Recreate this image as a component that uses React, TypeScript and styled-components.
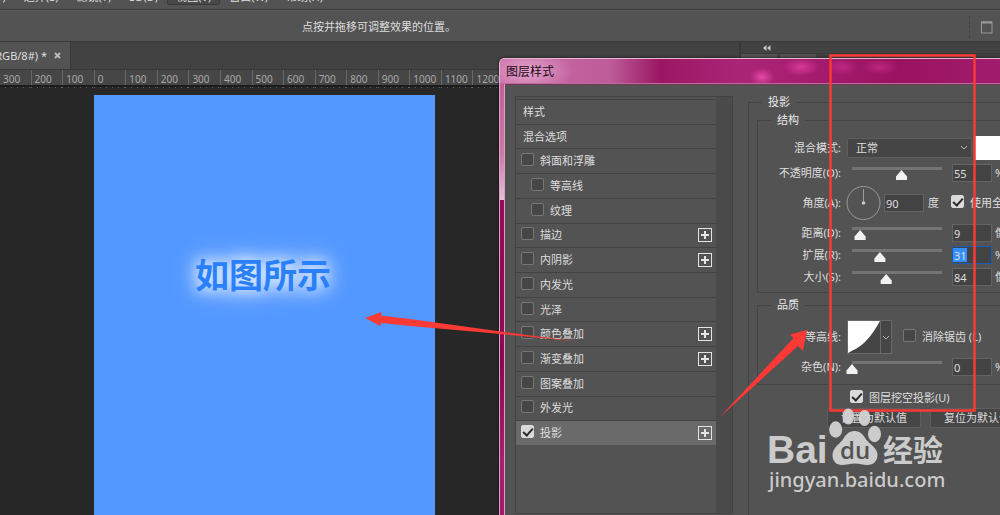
import React from "react";
import styled, { createGlobalStyle, css } from "styled-components";

const GlobalStyle = createGlobalStyle`
  * { box-sizing: border-box; }
  body {
    margin: 0;
    background: #272727;
    color: #dedede;
    font: 11px/16px "Noto Sans", "Noto Sans CJK SC", sans-serif;
    overflow: hidden;
  }
  button, input, select { font: inherit; color: inherit; margin: 0; }
`;

const Screen = styled.div`
  position: relative;
  display: flex;
  flex-direction: column;
  height: 100vh;
  overflow: hidden;
  white-space: nowrap;
`;

const MenuBar = styled.nav`
  display: flex;
  align-items: flex-end;
  height: 10px;
  flex: none;
  overflow: hidden;
  background: #535353;
  border-bottom: 1px solid #3c3c3c;
  padding-bottom: 4px;
`;

const MenuItems = styled.div`
  display: flex;
  margin-left: -38px;
`;

const MenuItem = styled.button<{ $active?: boolean }>`
  flex: none;
  border: 1px solid ${(p) => (p.$active ? "#3a3a3a" : "transparent")};
  border-radius: 2px;
  background: ${(p) => (p.$active ? "#484848" : "none")};
  padding: 0 8px;
  line-height: 14px;
`;

const OptionBar = styled.header`
  display: flex;
  align-items: center;
  justify-content: space-between;
  height: 32px;
  flex: none;
  background: #535353;
  border-top: 1px solid #5a5a5a;
  border-bottom: 1px solid #3a3a3a;
  padding: 2px 7px 0 302px;
`;

const Workspace = styled.button`
  display: flex;
  align-items: center;
  border: 0;
  border-left: 1px dashed #444;
  background: none;
  padding: 0 0 0 11px;
  height: 22px;
`;

const TabBar = styled.div`
  display: flex;
  justify-content: space-between;
  height: 27px;
  flex: none;
  background: #424242;
`;

const DocTab = styled.div`
  display: flex;
  align-items: center;
  gap: 7px;
  width: 71px;
  flex: none;
  background: #535353;
  border-right: 1px solid #3a3a3a;
`;

const CloseButton = styled.button`
  border: 0;
  background: none;
  padding: 0;
  display: flex;
`;

const DocName = styled.span`
  display: flex;
  justify-content: flex-end;
  width: 47px;
  overflow: hidden;
`;

const PanelDock = styled.div`
  width: 261px;
  border-left: 2px solid #383838;
`;

const DockHandle = styled.div`
  height: 12px;
  padding: 3px 0 0 22px;
  border-bottom: 1px solid #3a3a3a;
  line-height: 0;
`;

const DockTabs = styled.div`
  display: flex;
  gap: 3px;
  div { width: 36px; height: 15px; background: #535353; }
`;

const Ruler = styled.div`
  display: grid;
  grid-template-columns: repeat(16, 1fr);
  width: 505px;
  margin-left: -1px;
  height: 16px;
  flex: none;
  background: #464646;
  border-top: 1px solid #383838;
  color: #a8a8a8;
  font-size: 10px;
  line-height: 18px;
`;

const RulerCell = styled.div`
  border-left: 1px solid #686868;
  padding-left: 3px;
  background: repeating-linear-gradient(90deg, transparent 0 5px, #606060 5px 6px) 0 100% / 100% 2px no-repeat;
`;

const Canvas = styled.main`
  flex: 1;
  border-top: 2px solid #1c1c1c;
  padding: 8px 0 0 94px;
`;

const Artboard = styled.div`
  width: 341px;
  height: 100%;
  background: #5298ff;
  padding-top: 154px;
  padding-left: 101px;
  color: #2a80fb;
  font: bold 34px/50px "Noto Sans CJK SC", sans-serif;
  text-shadow: 0 0 14px rgba(255, 255, 255, 0.8), 0 0 20px rgba(255, 255, 255, 0.7),
    0 0 32px rgba(255, 255, 255, 0.5);
`;

const Dialog = styled.section`
  position: absolute;
  left: 499px;
  right: 0;
  top: 58px;
  bottom: 0;
  display: flex;
  flex-direction: column;
  overflow: hidden;
  border-radius: 5px 0 0 0;
  box-shadow: 0 0 3px #111;
`;

const TitleBar = styled.h1`
  margin: 0;
  flex: none;
  height: 26px;
  padding-left: 6px;
  border: solid #eab6d4;
  border-width: 1px 0 1px 1px;
  border-bottom-color: #c2689c;
  border-radius: 5px 0 0 0;
  color: #1c0714;
  font: 12px/23px "Noto Sans CJK SC", sans-serif;
  background:
    radial-gradient(ellipse 46px 24px at 28px 12px, rgba(230, 170, 208, 0.9), transparent),
    radial-gradient(ellipse 12px 9px at 262px 18px, rgba(236, 80, 170, 0.9), transparent),
    radial-gradient(ellipse 18px 9px at 301px 8px, rgba(222, 60, 156, 0.9), transparent),
    radial-gradient(ellipse 16px 8px at 342px 8px, rgba(210, 50, 145, 0.6), transparent),
    radial-gradient(ellipse 18px 8px at 380px 8px, rgba(210, 50, 145, 0.6), transparent),
    linear-gradient(90deg, #c86aa5 0, #bd5c99 110px, #9b1763 160px, #ab2577 240px, #a21a6b 330px, #9a1362 400px, #a21c6d 100%);
`;

const DialogBody = styled.div`
  display: flex;
  flex: 1;
  min-height: 0;
`;

const Rail = styled.div`
  width: 6px;
  flex: none;
  border: solid #dba0c4;
  border-width: 0 1px;
  background: linear-gradient(#c2609a 0, #cb78a8 70px, #e2c2d4 116px, #980a5c 116px, #8c0852 280px, #a82070 380px, #a31868 100%);
`;

const DialogContent = styled.div`
  display: flex;
  flex: 1;
  gap: 15px;
  min-width: 0;
  padding: 11px 0 0 10px;
  background: #535353;
  border-top: 1px solid #6a3c56;
`;

const StylePanel = styled.div`
  width: 218px;
  flex: none;
  margin-bottom: 1px;
  padding: 2px 16px 0 0;
  border: 1px solid #434343;
  background: linear-gradient(90deg, transparent 200px, #4a4a4a 200px);
`;

const StyleList = styled.ul`
  display: grid;
  grid-template-rows: repeat(14, 1fr);
  height: 346px;
  margin: 0;
  padding: 0;
  list-style: none;
`;

const StyleRow = styled.li<{ $indent?: boolean; $head?: boolean; $active?: boolean }>`
  display: flex;
  align-items: center;
  justify-content: space-between;
  border-top: 1px solid #424242;
  padding: 0 4px 0 ${(p) => (p.$head ? "7px" : p.$indent ? "15px" : "5px")};
  background: ${(p) => (p.$active ? "#6a6a6a" : "none")};
`;

const check = css`
  background: #dadada;
  border-color: #dadada;
  &::after {
    content: "";
    position: absolute;
    left: 3px;
    top: 0;
    width: 4px;
    height: 8px;
    border: solid #2c2c2c;
    border-width: 0 2px 2px 0;
    transform: rotate(42deg);
  }
`;

const CheckBox = styled.input.attrs({ type: "checkbox" })`
  appearance: none;
  position: relative;
  flex: none;
  width: 13px;
  height: 13px;
  border: 1px solid #777;
  border-radius: 2px;
  background: #464646;
  &:checked { ${check} }
`;

const CheckLabel = styled.label`
  display: flex;
  align-items: center;
  gap: 6px;
  input { margin-bottom: 3px; }
`;

const AddButton = styled.button`
  display: flex;
  padding: 0;
  border: 0;
  background: none;
`;

const Group = styled.fieldset<{ $outer?: boolean }>`
  flex: ${(p) => (p.$outer ? "1" : "none")};
  min-width: 0;
  margin: ${(p) => (p.$outer ? "0" : "6px 0 0 8px")};
  padding: 0;
  border: 1px solid #454545;
  border-right: 0;
  ${(p) => p.$outer && "border-bottom: 0;"}
`;

const GroupTitle = styled.legend`
  margin-left: 13px;
  padding: 0 6px;
  line-height: 12px;
  color: #e8e8e8;
`;

const Fields = styled.div<{ $top: number }>`
  padding: ${(p) => p.$top}px 0 4px;
`;

const Field = styled.div<{ $h: number; $gap?: number }>`
  display: flex;
  align-items: center;
  height: ${(p) => p.$h}px;
  margin-bottom: ${(p) => p.$gap || 0}px;
`;

const FieldLabel = styled.label`
  width: 83px;
  flex: none;
  margin-right: 5px;
  text-align: right;
`;

const Slider = styled.input.attrs({ type: "range" })`
  appearance: none;
  width: 102px;
  height: 14px;
  flex: none;
  margin-right: 4px;
  background: linear-gradient(#747474, #747474) 6px 1px / 90px 3px no-repeat;
  &::-webkit-slider-runnable-track { height: 14px; }
  &::-webkit-slider-thumb {
    appearance: none;
    width: 12px;
    height: 10px;
    margin-top: 4px;
    background: #f2f2f2;
    clip-path: polygon(50% 0, 96% 65%, 96% 100%, 4% 100%, 4% 65%);
  }
`;

const NumberBox = styled.input<{ $focus?: boolean }>`
  width: 40px;
  height: 18px;
  flex: none;
  padding: 0 1px;
  border: 1px solid ${(p) => (p.$focus ? "#1c5bb4" : "#636363")};
  background: ${(p) =>
    p.$focus ? "linear-gradient(#3390ff, #3390ff) 0 1px / 14px 14px no-repeat #434343" : "#434343"};
`;

const Unit = styled.span`
  margin-left: 3px;
`;

const SelectWrap = styled.div`
  display: flex;
  align-items: center;
  width: 125px;
  flex: none;
  margin: 0 3px 0 1px;
  svg { flex: none; margin-left: -12px; pointer-events: none; }
`;

const Select = styled.select`
  appearance: none;
  width: 125px;
  flex: none;
  height: 20px;
  padding: 0 8px;
  border: 1px solid #5c5c5c;
  border-radius: 2px;
  background: #454545;
`;

const Swatch = styled.button`
  flex: 1;
  height: 24px;
  border: 0;
  background: #fff;
`;

const Dial = styled.svg`
  flex: none;
  margin-right: 3px;
`;

const AngleUnit = styled.span`
  flex: none;
  width: 23px;
  margin-left: 4px;
`;

const ContourPicker = styled.button`
  display: flex;
  flex: none;
  width: 45px;
  height: 34px;
  margin: 0 11px 0 1px;
  padding: 0;
  border: 1px solid #6a6a6a;
  background: #454545;
`;

const KnockoutRow = styled.div`
  display: flex;
  height: 23px;
  padding: 2px 0 0 101px;
`;

const ButtonRow = styled.div`
  display: flex;
  gap: 9px;
  padding-left: 78px;
  overflow: hidden;
`;

const PushButton = styled.button`
  flex: none;
  height: 20px;
  padding: 0 13px;
  border: 1px solid #5e5e5e;
  border-radius: 2px;
  background: #464646;
  line-height: 14px;
`;

const Annotations = styled.svg`
  position: absolute;
  left: 0;
  top: 0;
  pointer-events: none;
`;

const Chevron = () => (
  <svg width="8" height="6" viewBox="0 0 8 6" fill="none" stroke="#b5b5b5">
    <path d="M1 1l3 3 3-3" />
  </svg>
);

const Plus = () => (
  <svg width="14" height="14" viewBox="0 0 14 14" fill="none" stroke="#e4e4e4">
    <rect x=".5" y=".5" width="13" height="13" />
    <path d="M7 3v8M3 7h8" strokeWidth="2" />
  </svg>
);

const effects = [
  { name: "斜面和浮雕" },
  { name: "等高线", indent: true },
  { name: "纹理", indent: true },
  { name: "描边", add: true },
  { name: "内阴影", add: true },
  { name: "内发光" },
  { name: "光泽" },
  { name: "颜色叠加", add: true },
  { name: "渐变叠加", add: true },
  { name: "图案叠加" },
  { name: "外发光" },
  { name: "投影", add: true, on: true },
];

type SliderFieldProps = {
  id: string;
  label: string;
  value: string;
  pos: number;
  unit: string;
  h?: number;
  focus?: boolean;
};

const SliderField = ({ id, label, value, pos, unit, h = 22, focus }: SliderFieldProps) => (
  <Field $h={h}>
    <FieldLabel htmlFor={id}>{label}</FieldLabel>
    <Slider aria-label={label} defaultValue={pos} />
    <NumberBox id={id} defaultValue={value} $focus={focus} />
    <Unit>{unit}</Unit>
  </Field>
);

const menus = ["文字(Y)", "选择(S)", "滤镜(T)", "3D(D)", "视图(V)", "窗口(W)", "帮助(H)"];
const marks = [300, 200, 100, 0, 100, 200, 300, 400, 500, 600, 700, 800, 900, 1000, 1100, 1200];

export default function App() {
  return (
    <Screen>
      <GlobalStyle />
      <MenuBar>
        <MenuItems>
          {menus.map((m) => (
            <MenuItem key={m} $active={m === "视图(V)"}>{m}</MenuItem>
          ))}
        </MenuItems>
      </MenuBar>
      <OptionBar>
        <span>点按并拖移可调整效果的位置。</span>
        <Workspace aria-label="工作区">
          <svg width="12" height="13" viewBox="0 0 12 13" fill="none" stroke="#999">
            <rect x=".5" y="1" width="10.500" height="11" />
            <path d="M0 1.500h11" strokeWidth="2" />
          </svg>
        </Workspace>
      </OptionBar>
      <TabBar>
        <DocTab>
          <DocName>RGB/8#) *</DocName>
          <CloseButton aria-label="关闭">
            <svg width="7" height="7" viewBox="0 0 7 7" stroke="#bdbdbd" strokeWidth="1.800">
              <path d="M1 1l5 5M6 1L1 6" />
            </svg>
          </CloseButton>
        </DocTab>
        <PanelDock>
          <DockHandle>
            <svg width="8" height="6" viewBox="0 0 8 6" fill="#c4c4c4">
              <path d="M3.500 0v6L0 3zM7.500 0v6L4 3z" />
            </svg>
          </DockHandle>
          <DockTabs><div /><div /></DockTabs>
        </PanelDock>
      </TabBar>
      <Ruler>
        {marks.map((m, i) => (
          <RulerCell key={i}>{m}</RulerCell>
        ))}
      </Ruler>
      <Canvas>
        <Artboard>如图所示</Artboard>
      </Canvas>

      <Dialog aria-label="图层样式">
        <TitleBar>图层样式</TitleBar>
        <DialogBody>
          <Rail />
          <DialogContent>
            <StylePanel>
              <StyleList>
                <StyleRow $head>样式</StyleRow>
                <StyleRow $head>混合选项</StyleRow>
                {effects.map((e) => (
                  <StyleRow key={e.name} $indent={e.indent} $active={e.on}>
                    <CheckLabel>
                      <CheckBox defaultChecked={e.on} />
                      {e.name}
                    </CheckLabel>
                    {e.add && <AddButton aria-label={"添加" + e.name}><Plus /></AddButton>}
                  </StyleRow>
                ))}
              </StyleList>
            </StylePanel>
            <Group $outer>
              <GroupTitle>投影</GroupTitle>
              <Group>
                <GroupTitle>结构</GroupTitle>
                <Fields $top={10}>
                  <Field $h={24}>
                    <FieldLabel htmlFor="blend">混合模式:</FieldLabel>
                    <SelectWrap>
                      <Select id="blend"><option>正常</option></Select>
                      <Chevron />
                    </SelectWrap>
                    <Swatch aria-label="阴影颜色" />
                  </Field>
                  <SliderField id="opacity" label="不透明度(O):" value="55" pos={55} unit="%" h={26} />
                  <Field $h={34} $gap={2}>
                    <FieldLabel htmlFor="angle">角度(A):</FieldLabel>
                    <Dial width="35" height="34" viewBox="0 0 35 34" fill="none" stroke="#9a9a9a">
                      <circle cx="17.500" cy="17" r="16.500" />
                      <path d="M17.500 3v14" />
                      <circle cx="17.500" cy="17" r="1.800" fill="#c8c8c8" stroke="none" />
                    </Dial>
                    <NumberBox id="angle" defaultValue="90" />
                    <AngleUnit>度</AngleUnit>
                    <CheckLabel><CheckBox defaultChecked />使用全局光</CheckLabel>
                  </Field>
                  <SliderField id="distance" label="距离(D):" value="9" pos={9} unit="像素" />
                  <SliderField id="spread" label="扩展(R):" value="31" pos={31} unit="%" focus />
                  <SliderField id="size" label="大小(S):" value="84" pos={38} unit="像素" />
                </Fields>
              </Group>
              <Group>
                <GroupTitle>品质</GroupTitle>
                <Fields $top={9}>
                  <Field $h={34}>
                    <FieldLabel>等高线:</FieldLabel>
                    <ContourPicker aria-label="等高线">
                      <svg width="43" height="32" viewBox="0 0 43 32">
                        <path d="M0 0h32C28 7 23 15 17 21 11 27 5 29 0 32z" fill="#fff" />
                        <path d="M32.500 0v32" stroke="#6a6a6a" />
                        <path d="M35 15l3 3 3-3" fill="none" stroke="#b5b5b5" />
                      </svg>
                    </ContourPicker>
                    <CheckLabel><CheckBox />消除锯齿 (L)</CheckLabel>
                  </Field>
                  <SliderField id="noise" label="杂色(N):" value="0" pos={0} unit="%" h={26} />
                </Fields>
              </Group>
              <KnockoutRow>
                <CheckLabel><CheckBox defaultChecked />图层挖空投影(U)</CheckLabel>
              </KnockoutRow>
              <ButtonRow>
                <PushButton>设置为默认值</PushButton>
                <PushButton>复位为默认值</PushButton>
              </ButtonRow>
            </Group>
          </DialogContent>
        </DialogBody>
      </Dialog>

      <Annotations width="1000" height="515" viewBox="0 0 1000 515">
        <rect x="830.500" y="55.500" width="144" height="355" fill="none" stroke="#fb3a36" strokeWidth="2.500" />
        <path d="M365 318L381.500 312l-.500 3.500L410 319 490 330 577 341.500 490 333 410 326 381 323l-.500 3z" fill="#fb3a36" />
        <path d="M807 330l-17 4.500 3.500 3.500L719 418l79-72 5 5z" fill="#fb3a36" />
        <g fill="#d3d3d3" fillOpacity=".94">
          <text x="767" y="463" fontFamily="Liberation Sans" fontWeight="bold" fontSize="39">Bai</text>
          <ellipse cx="835.700" cy="429.500" rx="6.500" ry="8.300" />
          <ellipse cx="848.300" cy="416.500" rx="5.800" ry="8" />
          <ellipse cx="864.500" cy="418" rx="5.800" ry="8" />
          <ellipse cx="874.500" cy="434" rx="6.500" ry="8.200" />
          <path d="M854.500 431c6 0 9 4 12 9 4 5 11 8 11 15 0 6-4 10-10 10-5 0-8-1.500-12.500-1.500S846 465 842 465c-6 0-9.500-4-9.500-10 0-7 6-10 10-15 3-5 6-9 12-9z" />
          <text x="883" y="461" fontFamily="Noto Sans CJK SC" fontWeight="bold" fontSize="30">经验</text>
          <text x="769" y="487" fontFamily="Noto Sans" fontWeight="500" fontSize="20">jingyan.baidu.com</text>
        </g>
        <text x="840" y="459" fill="#535353" fontFamily="Open Sans" fontWeight="600" fontSize="24">du</text>
      </Annotations>
    </Screen>
  );
}
